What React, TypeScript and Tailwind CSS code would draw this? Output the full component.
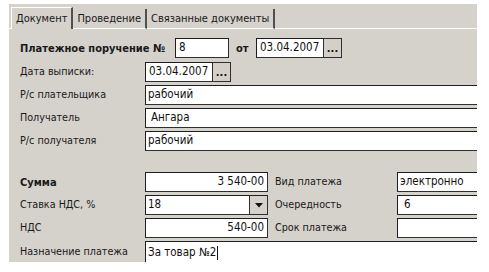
import React from "react";

const font = { fontFamily: '"DejaVu Sans Condensed", "DejaVu Sans", sans-serif', fontStretch: "condensed" as const };

function Box({ className = "", children }: { className?: string; children?: React.ReactNode }) {
  return (
    <div
      className={
        "h-[20px] bg-white border border-[#2f2f2f] border-t-[#1e1e1e] border-l-[#1e1e1e] flex items-center px-[3px] text-[11.5px] text-[#111] leading-none whitespace-nowrap overflow-hidden " +
        className
      }
    >
      {children}
    </div>
  );
}

function Dots() {
  return (
    <div className="h-[20px] w-[18px] bg-[#d4d0c8] border border-[#2f2f2f] border-l-0 flex items-end justify-center pb-[3px] text-[11px] font-bold leading-none text-[#111]">
      ...
    </div>
  );
}

function Label({ children, bold = false, className = "" }: { children: React.ReactNode; bold?: boolean; className?: string }) {
  return (
    <div
      className={
        "leading-none text-[#1a1a1a] whitespace-nowrap " +
        (bold ? "font-bold text-[11px] " : "text-[10.7px] ") +
        className
      }
    >
      {children}
    </div>
  );
}

export default function App() {
  return (
    <div className="w-[489px] h-[272px] bg-white overflow-hidden pt-[4px] pl-[9px]" style={font}>
      <div className="w-[468px] h-[258px] bg-[#d5d1cb] overflow-hidden flex flex-col">
        {/* Tabs */}
        <div className="h-[25px] flex items-end shrink-0">
          <div className="w-[2px] h-full border-b border-white" />
          <div className="h-[22px] px-[4px] flex items-center border-l border-t border-white border-r-2 border-r-[#505050] text-[11px] leading-none text-[#1a1a1a]">
            Документ
          </div>
          <div className="h-[20px] px-[4px] flex items-center border-b border-white border-r-2 border-r-[#505050] text-[11px] leading-none text-[#1a1a1a]">
            Проведение
          </div>
          <div className="h-[20px] px-[4px] flex items-center border-b border-white border-r-2 border-r-[#505050] text-[11px] leading-none text-[#1a1a1a]">
            Связанные документы
          </div>
          <div className="flex-1 h-full border-b border-white" />
        </div>

        {/* Платежное поручение */}
        <div className="mt-[9px] flex items-center h-[20px]">
          <div className="w-[166px] pl-[11px]">
            <Label bold>Платежное поручение №</Label>
          </div>
          <Box className="w-[54px]">8</Box>
          <div className="w-[27px] pl-[7px]">
            <Label bold>от</Label>
          </div>
          <Box className="w-[68px]">03.04.2007</Box>
          <Dots />
        </div>

        {/* Дата выписки */}
        <div className="mt-[4px] flex items-center h-[20px]">
          <div className="w-[136px] pl-[11px]">
            <Label>Дата выписки:</Label>
          </div>
          <Box className="w-[68px]">03.04.2007</Box>
          <Dots />
        </div>

        {/* Р/с плательщика */}
        <div className="mt-[3px] flex items-center h-[20px]">
          <div className="w-[136px] shrink-0 pl-[11px]">
            <Label>Р/с плательщика</Label>
          </div>
          <Box className="w-[345px] shrink-0 !px-[2px]">рабочий</Box>
        </div>

        <div className="mt-[3px] flex items-center h-[20px]">
          <div className="w-[136px] shrink-0 pl-[11px]">
            <Label>Получатель</Label>
          </div>
          <Box className="w-[345px] shrink-0 !px-[5px]">Ангара</Box>
        </div>

        <div className="mt-[3px] flex items-center h-[20px]">
          <div className="w-[136px] shrink-0 pl-[11px]">
            <Label>Р/с получателя</Label>
          </div>
          <Box className="w-[345px] shrink-0 !px-[2px]">рабочий</Box>
        </div>

        {/* Сумма */}
        <div className="mt-[21px] flex items-center h-[20px]">
          <div className="w-[136px] shrink-0 pl-[11px]">
            <Label bold>Сумма</Label>
          </div>
          <Box className="w-[123px] shrink-0 justify-end">3 540-00</Box>
          <div className="w-[129px] shrink-0 pl-[7px]">
            <Label>Вид платежа</Label>
          </div>
          <Box className="w-[100px] shrink-0 !px-[2px]">электронно</Box>
        </div>

        <div className="mt-[3px] flex items-center h-[20px]">
          <div className="w-[136px] shrink-0 pl-[11px]">
            <Label>Ставка НДС, %</Label>
          </div>
          <div className="w-[123px] shrink-0 h-[20px] flex bg-white border border-[#2f2f2f] border-t-[#1e1e1e] border-l-[#1e1e1e]">
            <div className="flex-1 flex items-center px-[2px] text-[11.5px] leading-none text-[#111]">18</div>
            <div className="w-[18px] h-full bg-[#d5d1cb] border-l border-[#2f2f2f] flex items-center justify-center">
              <svg width="8" height="5" viewBox="0 0 8 5">
                <path d="M0 0 H8 L4 4.5 Z" fill="#111" />
              </svg>
            </div>
          </div>
          <div className="w-[129px] shrink-0 pl-[7px]">
            <Label>Очередность</Label>
          </div>
          <Box className="w-[100px] shrink-0 !px-[6px]">6</Box>
        </div>

        <div className="mt-[3px] flex items-center h-[20px]">
          <div className="w-[136px] shrink-0 pl-[11px]">
            <Label>НДС</Label>
          </div>
          <Box className="w-[123px] shrink-0 justify-end">540-00</Box>
          <div className="w-[129px] shrink-0 pl-[7px]">
            <Label>Срок платежа</Label>
          </div>
          <Box className="w-[100px] shrink-0" />
        </div>

        {/* Назначение платежа */}
        <div className="mt-[3px] flex items-center h-[22px]">
          <div className="w-[136px] shrink-0 pl-[11px]">
            <Label>Назначение платежа</Label>
          </div>
          <div className="w-[345px] shrink-0 h-[22px] bg-white border-t border-l border-[#1e1e1e] flex items-center px-[2px] text-[11.5px] leading-none text-[#111]">
            За товар №2<span className="inline-block w-px h-[14px] bg-[#111] ml-[1px]" />
          </div>
        </div>
      </div>
    </div>
  );
}
